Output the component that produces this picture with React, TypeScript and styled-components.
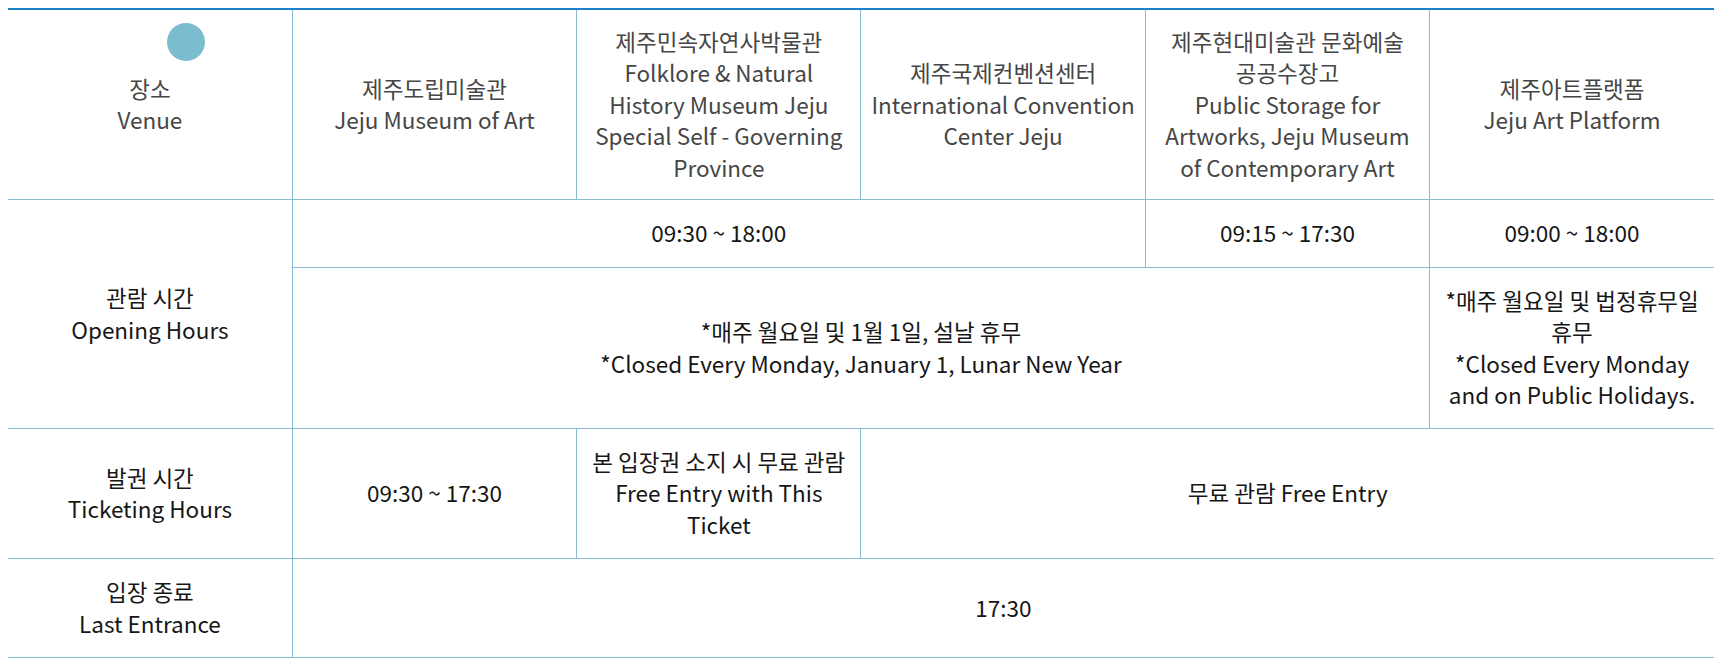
import React from "react";
import styled, { createGlobalStyle } from "styled-components";

const Global = createGlobalStyle`
  html, body { margin: 0; padding: 0; background: #ffffff; }
  body { padding: 8px; font-family: "Noto Sans CJK KR", "Noto Sans", sans-serif; }
`;

const Wrap = styled.div`
  position: relative;
  width: 1706px;
`;

const Table = styled.table`
  width: 100%;
  table-layout: fixed;
  border-collapse: collapse;
  border-top: 2px solid #1b82c6;
  font-size: 22.5px;
  line-height: 31.5px;
  text-align: center;
`;

const Row = styled.tr<{ $h: number }>`
  height: ${(p) => p.$h}px;
`;

const Cell = styled.td<{ $head?: boolean; $first?: boolean; $last?: boolean }>`
  border: 1px solid #89bbd2;
  border-left: ${(p) => (p.$first ? "none" : "1px solid #89bbd2")};
  border-right: ${(p) => (p.$last ? "none" : "1px solid #89bbd2")};
  padding: 0 9px;
  vertical-align: middle;
  word-break: keep-all;
  color: ${(p) => (p.$head ? "#464646" : "#161616")};
  font-weight: 400;
`;

const Dot = styled.span`
  position: absolute;
  left: 159px;
  top: 15px;
  width: 38px;
  height: 38px;
  border-radius: 50%;
  background: #7bbccf;
`;

const Lines = ({ items }: { items: string[] }) => (
  <>
    {items.map((t, i) => (
      <React.Fragment key={i}>
        {i > 0 && <br />}
        {t}
      </React.Fragment>
    ))}
  </>
);

export default function App() {
  return (
    <>
      <Global />
      <Wrap>
        <Dot />
        <Table>
          <colgroup>
            <col span={6} />
          </colgroup>
          <tbody>
            <Row $h={190}>
              <Cell $head $first>
                <Lines items={["장소", "Venue"]} />
              </Cell>
              <Cell $head>
                <Lines items={["제주도립미술관", "Jeju Museum of Art"]} />
              </Cell>
              <Cell $head>
                제주민속자연사박물관
                <br />
                Folklore &amp; Natural History Museum Jeju Special Self - Governing Province
              </Cell>
              <Cell $head>
                제주국제컨벤션센터
                <br />
                International Convention Center Jeju
              </Cell>
              <Cell $head>
                제주현대미술관 문화예술 공공수장고
                <br />
                Public Storage for Artworks, Jeju Museum of Contemporary Art
              </Cell>
              <Cell $head $last>
                <Lines items={["제주아트플랫폼", "Jeju Art Platform"]} />
              </Cell>
            </Row>
            <Row $h={68}>
              <Cell $first rowSpan={2}>
                <Lines items={["관람 시간", "Opening Hours"]} />
              </Cell>
              <Cell colSpan={3}>09:30 ~ 18:00</Cell>
              <Cell>09:15 ~ 17:30</Cell>
              <Cell $last>09:00 ~ 18:00</Cell>
            </Row>
            <Row $h={161}>
              <Cell colSpan={4}>
                <Lines
                  items={[
                    "*매주 월요일 및 1월 1일, 설날 휴무",
                    "*Closed Every Monday, January 1, Lunar New Year",
                  ]}
                />
              </Cell>
              <Cell $last>
                *매주 월요일 및 법정휴무일 휴무
                <br />
                *Closed Every Monday and on Public Holidays.
              </Cell>
            </Row>
            <Row $h={130}>
              <Cell $first>
                <Lines items={["발권 시간", "Ticketing Hours"]} />
              </Cell>
              <Cell>09:30 ~ 17:30</Cell>
              <Cell>
                본 입장권 소지 시 무료 관람
                <br />
                Free Entry with This Ticket
              </Cell>
              <Cell colSpan={3} $last>
                무료 관람 Free Entry
              </Cell>
            </Row>
            <Row $h={99}>
              <Cell $first>
                <Lines items={["입장 종료", "Last Entrance"]} />
              </Cell>
              <Cell colSpan={5} $last>
                17:30
              </Cell>
            </Row>
          </tbody>
        </Table>
      </Wrap>
    </>
  );
}
